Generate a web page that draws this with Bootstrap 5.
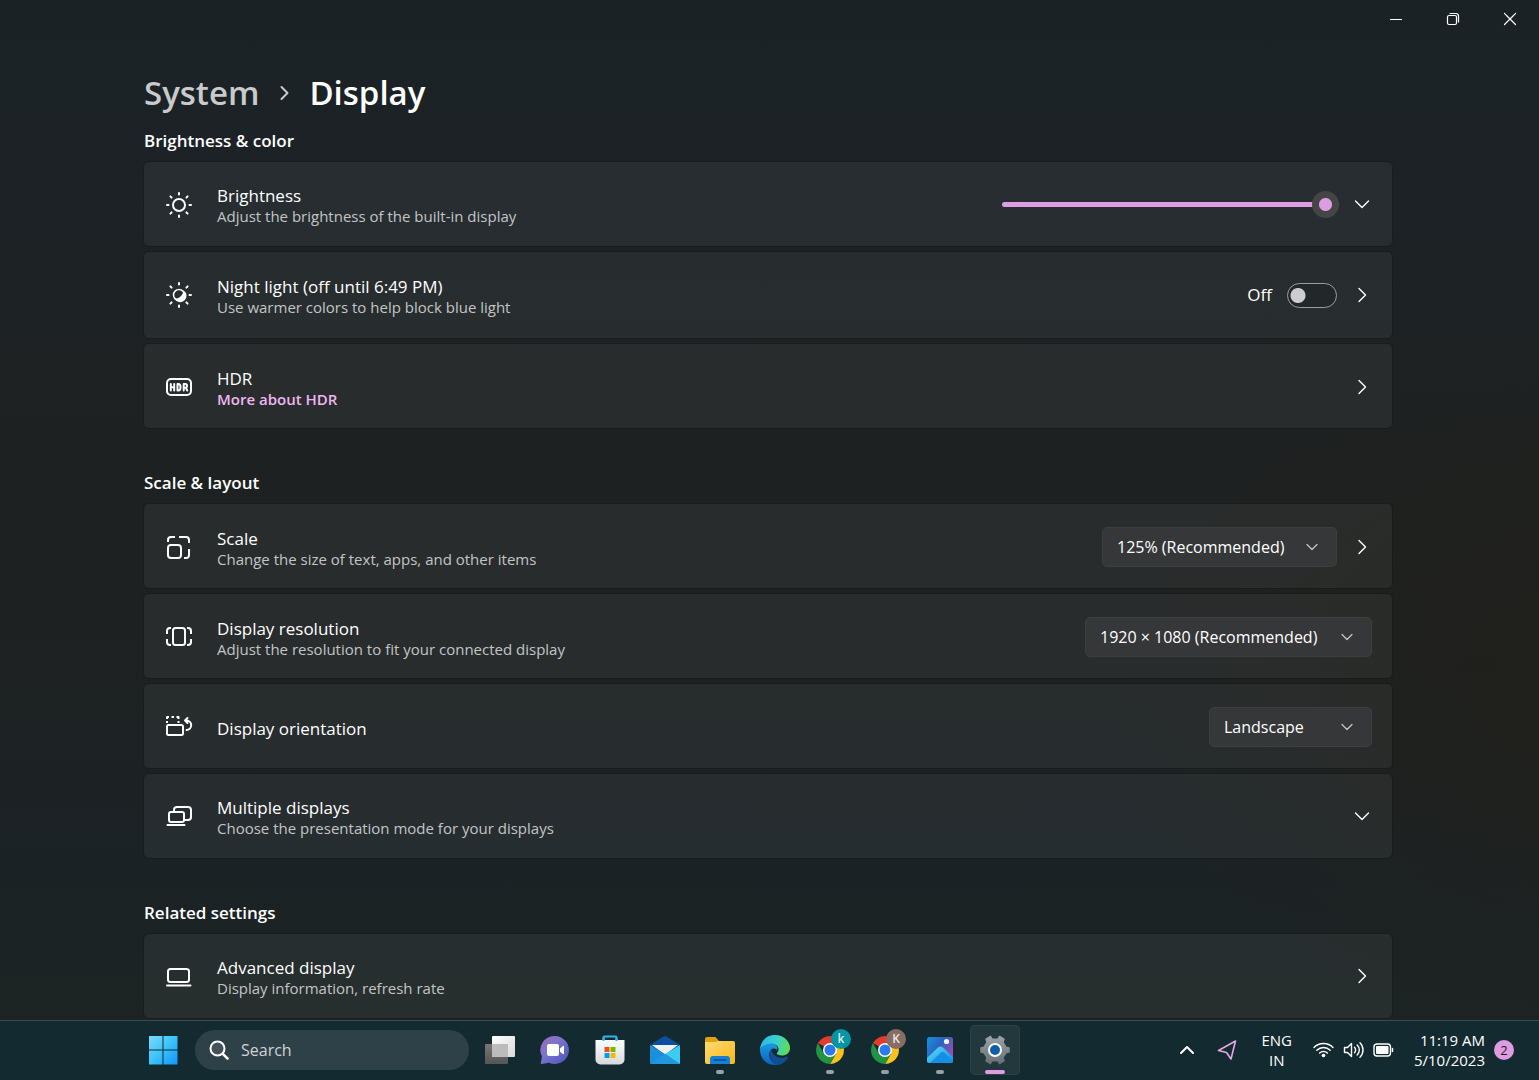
<!DOCTYPE html>
<html lang="en">
<head>
<meta charset="utf-8">
<meta name="viewport" content="width=device-width, initial-scale=1">
<title>Settings - Display</title>
<link href="https://cdn.jsdelivr.net/npm/bootstrap@5.3.0/dist/css/bootstrap.min.css" rel="stylesheet">
<style>
  :root { --accent: #de9de3; --accent-text: #efb6f0; --muted: #c3c5c6; }
  body {
    font-family: "Open Sans", "Noto Sans", sans-serif;
    font-size: 16px;
    color: #fff;
    background:
      radial-gradient(ellipse 32% 32% at 104% 64%, #20201b 0%, rgba(32,32,27,0) 100%),
      linear-gradient(180deg, #1b2226 0%, #1c2225 20%, #1e2121 42%, #1e2121 55%, #1b2225 80%, #1d2422 100%);
  }
  button, a { color: inherit; }
  svg { display: block; }
  .ico { fill: none; stroke: currentColor; stroke-width: 2; stroke-linecap: round; stroke-linejoin: round; flex: none; }
  .thin { stroke-width: 1.4; }
  .hair { stroke-width: 1.2; }
  .soft { stroke: #c8cacb; }
  .pink { stroke: #e5a5ea; stroke-width: 1.6; }
  .plain { border: 0; background: none; padding: 0; color: #fff; }

  .caption-bar { height: 38px; padding-right: 1px; }
  .caption-bar button { width: 57px; height: 38px; display: grid; place-items: center; }

  .page-pane { padding: 0 3px 0 0; }
  .page-column { max-width: 1248px; }
  .crumbs { font-size: 33px; line-height: 44px; font-weight: 600; padding-top: 33px; gap: 18px; }
  .crumbs a { color: #c8cacb; text-decoration: none; }
  .group-title { font-size: 17px; line-height: 24px; font-weight: 600; margin: 0; padding: 43px 0 9px; }
  .crumbs + section .group-title { padding-top: 14px; }
  .stack { gap: 6px; }

  .setting { min-height: 84px; padding: 10px 20px 8px 21px; gap: 24px; border-radius: 5px;
    background: rgba(255,255,255,.052); box-shadow: 0 0 0 1px rgba(0,0,0,.14); }
  .setting.expands { padding-top: 8px; }
  .setting.tall { min-height: 86px; padding-top: 8px; }
  .setting-text { padding-top: 4px; }
  .setting-name { font-size: 17px; line-height: 21px; }
  .setting-note { font-size: 15px; line-height: 21px; color: var(--muted); }
  .setting-note a { color: var(--accent-text); text-decoration: none; font-weight: 600; }
  .controls { gap: 15px; }
  .slider-controls { gap: 13px; }

  .form-select.drop { width: auto; height: 40px; padding: 0 40px 0 14px; font-size: 16px; line-height: 38px;
    color: #fff; border: 1px solid #3c3e3f; border-radius: 5px; background-color: #353738;
    background-image: url("data:image/svg+xml,%3csvg xmlns='http://www.w3.org/2000/svg' viewBox='0 0 12 12'%3e%3cpath fill='none' stroke='%23c3c5c6' stroke-width='1.3' stroke-linecap='round' stroke-linejoin='round' d='M1 3.5l5 5 5-5'/%3e%3c/svg%3e");
    background-repeat: no-repeat; background-position: right 18px center; background-size: 12px 12px; }
  .form-select.drop option { background: #2b2d2e; }
  .form-select.w-scale { width: 235px; }
  .form-select.w-res { width: 287px; }
  .form-select.w-orient { width: 163px; }

  .form-range.level { width: 337px; height: 28px; }
  .level::-webkit-slider-runnable-track { height: 5px; border-radius: 3px; background: var(--accent); }
  .level::-webkit-slider-thumb { width: 27px; height: 27px; margin-top: -11px; border-radius: 50%;
    background: radial-gradient(circle, var(--accent) 0 6px, #454545 7px); box-shadow: none; }
  .level::-webkit-slider-thumb:active { background: radial-gradient(circle, var(--accent) 0 6px, #454545 7px); }

  .form-switch.onoff { padding: 0; min-height: 0; margin: 0; gap: 15px; font-size: 17px; }
  .form-switch.onoff .form-check-input { float: none; width: 50px; height: 25px; margin: 0; border: 1px solid #9b9d9e; background-color: #22272a;
    background-image: radial-gradient(circle at 10px 50%, #cccdce 7px, transparent 8px); background-position: left; }

  .taskbar { height: 60px; padding: 0 25px 2px 138px; background: #132b30; border-top: 1px solid #3b4c50; }
  .apps { gap: 5px; }
  .task { width: 50px; height: 50px; border-radius: 5px; display: grid; place-items: center; }
  .task.running::after, .task.current::after { content: ""; position: absolute; bottom: 1px; left: 50%; width: 8px; margin-left: -4px; height: 4px; border-radius: 2px; background: #98a2a4; }
  .task.current { background: #22383d; box-shadow: inset 0 0 0 1px #2c4146; }
  .task.current::after { width: 20px; margin-left: -10px; background: var(--accent); }
  .finder { width: 274px; height: 40px; border-radius: 20px; padding: 0 14px; gap: 12px; background: #2e4148; margin: 0 1px 0 2px; }
  .finder input { background: none; border: 0; outline: 0; font-size: 16px; color: #fff; width: 100%; padding: 0; }
  .finder input::placeholder { color: #cfd3d5; opacity: 1; }
  .who { position: absolute; top: 4px; right: 4px; width: 20px; height: 20px; border-radius: 50%; font: 600 12px/19px "Open Sans", sans-serif; color: #e4e8e8; text-align: center; }
  .who-teal { background: #0295a4; }
  .who-brown { background: #8a6d62; }
  .tray { font-size: 15px; line-height: 20px; }
  .tray-hidden { margin-right: 22px; }
  .tray-location { margin-right: 24px; }
  .tray-status { gap: 9px; margin: 0 20px 0 21px; }
  .unread { width: 20px; height: 20px; border-radius: 50%; background: var(--accent); color: #1b1b1b; font-size: 13px; line-height: 20px; margin-left: 9px; }
</style>
<script src="https://cdn.jsdelivr.net/npm/bootstrap@5.3.0/dist/js/bootstrap.bundle.min.js"></script>
</head>
<body class="vh-100 d-flex flex-column overflow-hidden">

<header class="caption-bar d-flex justify-content-end flex-shrink-0">
  <button class="plain" aria-label="Minimize"><svg class="ico hair" width="14" height="14"><path d="M1.500 7.500h11"/></svg></button>
  <button class="plain" aria-label="Restore"><svg class="ico hair" width="14" height="14"><rect x="1.500" y="3.500" width="9" height="9" rx="1.500"/><path d="M4 1.500h6a2.500 2.500 0 0 1 2.500 2.500v6"/></svg></button>
  <button class="plain" aria-label="Close"><svg class="ico hair" width="14" height="14"><path d="M1.500 1.500l11 11M12.500 1.500l-11 11"/></svg></button>
</header>

<main class="page-pane flex-grow-1 overflow-hidden">
  <div class="page-column mx-auto">
    <nav class="crumbs d-flex align-items-center" aria-label="Breadcrumb">
      <a href="#">System</a>
      <svg class="ico soft" width="14" height="16"><path d="M4.500 2l6 6-6 6"/></svg>
      <span aria-current="page">Display</span>
    </nav>

    <section>
      <h2 class="group-title">Brightness &amp; color</h2>
      <div class="stack d-flex flex-column">
        <div class="setting expands d-flex align-items-center">
          <svg class="ico" width="28" height="28" viewBox="0 0 28 28"><circle cx="14" cy="15" r="6"/><path d="M14 3v1.500M14 25.500V27M2 15h1.500M24.500 15H26M5.400 6.400l1.200 1.200M21.400 22.400l1.200 1.200M5.400 23.600l1.200-1.200M21.400 7.600l1.200-1.200"/></svg>
          <div class="setting-text flex-grow-1">
            <label class="setting-name d-block" for="brightness">Brightness</label>
            <div class="setting-note">Adjust the brightness of the built-in display</div>
          </div>
          <div class="slider-controls d-flex align-items-center">
            <input type="range" class="form-range level" id="brightness" min="0" max="100" value="100">
            <button class="plain" aria-label="Expand brightness"><svg class="ico thin" width="20" height="20"><path d="M3.500 7l6.500 6.500L16.500 7"/></svg></button>
          </div>
        </div>

        <div class="setting tall d-flex align-items-center">
          <svg class="ico" width="28" height="28" viewBox="0 0 28 28"><circle cx="14" cy="14" r="5.500" stroke-width="1.500"/><path d="M18.500 9.500A6.300 6.300 0 1 1 9.500 17.500C14 18 18 14.500 18.500 9.500Z" fill="currentColor" stroke="none"/><path d="M14 2v1.500M14 24.500V26M2 14h1.500M24.500 14H26M5.400 5.400l1.200 1.200M21.400 21.400l1.200 1.200M5.400 22.600l1.200-1.200M21.400 6.600l1.200-1.200"/></svg>
          <div class="setting-text flex-grow-1">
            <div class="setting-name">Night light (off until 6:49 PM)</div>
            <div class="setting-note">Use warmer colors to help block blue light</div>
          </div>
          <div class="controls d-flex align-items-center">
            <div class="form-check form-switch onoff d-flex align-items-center">
              <label for="night">Off</label>
              <input class="form-check-input" type="checkbox" role="switch" id="night" aria-label="Night light">
            </div>
            <button class="plain" aria-label="Night light settings"><svg class="ico thin" width="20" height="20"><path d="M7 3.500l6.500 6.500L7 16.500"/></svg></button>
          </div>
        </div>

        <div class="setting d-flex align-items-center">
          <svg class="ico" width="28" height="28" viewBox="0 0 28 28"><rect x="2" y="6" width="24" height="16" rx="4"/><path d="M5.800 11v6.500M9.200 11v6.500M5.800 14.200h3.400M12.500 11v6.500h.800c3 0 3-6.500 0-6.500zM18.700 17.500V11h1.600c2.300 0 2.300 3.700 0 3.700h-1.600M20.800 14.700l1.500 2.800"/></svg>
          <div class="setting-text flex-grow-1">
            <div class="setting-name">HDR</div>
            <div class="setting-note"><a href="#">More about HDR</a></div>
          </div>
          <button class="plain" aria-label="HDR settings"><svg class="ico thin" width="20" height="20"><path d="M7 3.500l6.500 6.500L7 16.500"/></svg></button>
        </div>
      </div>
    </section>

    <section>
      <h2 class="group-title">Scale &amp; layout</h2>
      <div class="stack d-flex flex-column">
        <div class="setting d-flex align-items-center">
          <svg class="ico" width="28" height="28" viewBox="0 0 28 28"><rect x="3" y="12" width="13" height="13" rx="3"/><path d="M3 9V7a3 3 0 0 1 3-3h4M14 4h7a3 3 0 0 1 3 3v3M24 16v6a3 3 0 0 1-3 3h-2" stroke-linecap="butt"/></svg>
          <div class="setting-text flex-grow-1">
            <label class="setting-name d-block" for="scale">Scale</label>
            <div class="setting-note">Change the size of text, apps, and other items</div>
          </div>
          <div class="controls d-flex align-items-center">
            <select class="form-select drop w-scale" id="scale"><option>125% (Recommended)</option></select>
            <button class="plain" aria-label="Custom scaling"><svg class="ico thin" width="20" height="20"><path d="M7 3.500l6.500 6.500L7 16.500"/></svg></button>
          </div>
        </div>

        <div class="setting d-flex align-items-center">
          <svg class="ico" width="28" height="28" viewBox="0 0 28 28"><rect x="8" y="5" width="12" height="17" rx="2.500"/><path d="M6 5H5a3 3 0 0 0-3 3v3M2 16v3a3 3 0 0 0 3 3h1M22 5h1a3 3 0 0 1 3 3v3M26 16v3a3 3 0 0 1-3 3h-1" stroke-linecap="butt"/></svg>
          <div class="setting-text flex-grow-1">
            <label class="setting-name d-block" for="resolution">Display resolution</label>
            <div class="setting-note">Adjust the resolution to fit your connected display</div>
          </div>
          <select class="form-select drop w-res" id="resolution"><option>1920 × 1080 (Recommended)</option></select>
        </div>

        <div class="setting d-flex align-items-center">
          <svg class="ico" width="28" height="28" viewBox="0 0 28 28"><rect x="2" y="12" width="16" height="10" rx="1.500"/><path d="M2 10V8M2 6V4h2M6.500 4h2.500M11.500 4h2v2M13.500 8v2" stroke-linecap="butt"/><path d="M20 7.500h1.500a4.700 4.700 0 0 1 0 9.400M22.500 5L20 7.500l2.500 2.500"/></svg>
          <div class="setting-text flex-grow-1"><label class="setting-name" for="orientation">Display orientation</label></div>
          <select class="form-select drop w-orient" id="orientation"><option>Landscape</option></select>
        </div>

        <div class="setting expands d-flex align-items-center">
          <svg class="ico" width="28" height="28" viewBox="0 0 28 28"><rect x="4" y="10" width="15" height="10" rx="2"/><path d="M9 9V8a3 3 0 0 1 3-3h11a3 3 0 0 1 3 3v7a3 3 0 0 1-3 3h-3M2.500 23h17"/></svg>
          <div class="setting-text flex-grow-1">
            <div class="setting-name">Multiple displays</div>
            <div class="setting-note">Choose the presentation mode for your displays</div>
          </div>
          <button class="plain" aria-label="Expand multiple displays"><svg class="ico thin" width="20" height="20"><path d="M3.500 7l6.500 6.500L16.500 7"/></svg></button>
        </div>
      </div>
    </section>

    <section>
      <h2 class="group-title">Related settings</h2>
      <div class="setting expands d-flex align-items-center">
        <svg class="ico" width="28" height="28" viewBox="0 0 28 28"><rect x="3" y="7" width="21" height="13" rx="2.500"/><path d="M2 23.500h23.500"/></svg>
        <div class="setting-text flex-grow-1">
          <div class="setting-name">Advanced display</div>
          <div class="setting-note">Display information, refresh rate</div>
        </div>
        <button class="plain" aria-label="Open advanced display"><svg class="ico thin" width="20" height="20"><path d="M7 3.500l6.500 6.500L7 16.500"/></svg></button>
      </div>
    </section>
  </div>
</main>

<footer class="taskbar d-flex align-items-center justify-content-between flex-shrink-0">
  <div class="apps d-flex align-items-center">
    <button class="plain task" aria-label="Start">
      <svg width="30" height="30"><defs><linearGradient id="win" gradientUnits="userSpaceOnUse" x1="0" y1="0" x2="30" y2="30"><stop offset="0" stop-color="#80dbff"/><stop offset=".5" stop-color="#3cc3fb"/><stop offset="1" stop-color="#0f93fa"/></linearGradient></defs><path fill="url(#win)" d="M1 1h13.500v13.500H1zM15.500 1H29.500v13.500h-14zM1 15.500h13.500v14H1zM15.500 15.500h14v14h-14z"/></svg>
    </button>
    <div class="finder d-flex align-items-center">
      <svg class="ico" width="20" height="20"><circle cx="8.500" cy="8.500" r="7" fill="#42545a"/><path d="M13.800 13.800l4.700 4.700" stroke-width="2.500"/></svg>
      <input type="text" placeholder="Search" aria-label="Search">
    </div>
    <button class="plain task" aria-label="Task view">
      <svg width="30" height="28"><defs><linearGradient id="tv" x2="1" y2="1"><stop stop-color="#fff"/><stop offset="1" stop-color="#d9d9d9"/></linearGradient><linearGradient id="tv2" x2="0" y2="1"><stop stop-color="#777"/><stop offset="1" stop-color="#555"/></linearGradient></defs><rect y="8" width="23" height="20" rx="1" fill="url(#tv2)"/><rect x="7" width="23" height="21" rx="1" fill="url(#tv)"/><path fill="#bcbcbc" d="M7 8h16v13H8a1 1 0 0 1-1-1z"/></svg>
    </button>
    <button class="plain task" aria-label="Chat">
      <svg width="30" height="30"><defs><linearGradient id="chat" x1="0" y1="0" x2="1" y2="1"><stop offset="0" stop-color="#a06ab4"/><stop offset=".4" stop-color="#7b74cf"/><stop offset="1" stop-color="#4b53bc"/></linearGradient></defs><path fill="url(#chat)" d="M15 1a14 14 0 1 1-6 26.700L2 29c-1 .200-1.400-.500-1.200-1.300L2 21.500A14 14 0 0 1 15 1z"/><rect x="7" y="9" width="12" height="12" rx="2" fill="#fff"/><path fill="#fff" d="M20 13.500l3-2.500c.600-.400 1 0 1 .600v7c0 .600-.400 1-1 .600l-3-2.500z"/></svg>
    </button>
    <button class="plain task" aria-label="Store">
      <svg width="30" height="30"><defs><linearGradient id="bag" x2="0" y2="1"><stop stop-color="#fff"/><stop offset="1" stop-color="#d6d8d9"/></linearGradient></defs><path fill="none" stroke="#2fb4ec" stroke-width="2.200" d="M8.500 6V2.500q0-1 1-1h11q1 0 1 1V6"/><path fill="url(#bag)" d="M1 5h28q.500 0 .500.500v19a5 5 0 0 1-5 5h-19a5 5 0 0 1-5-5v-19q0-.500.500-.500z"/><path d="M8.500 3v3M21.500 3v3" stroke="#2fb4ec" stroke-width="2"/><path fill="#f04e26" d="M9.500 12h5v5h-5z"/><path fill="#7db800" d="M15.500 12h5v5h-5z"/><path fill="#009fee" d="M9.500 18h5v5h-5z"/><path fill="#fdb600" d="M15.500 18h5v5h-5z"/></svg>
    </button>
    <button class="plain task" aria-label="Mail">
      <svg width="30" height="30"><path fill="#0a4fa0" d="M0 10L13.500 1.600q1.500-.800 3 0L30 10l-3 3H3z"/><path fill="#f1f1f1" d="M2 10h26L15 20z"/><path fill="#1a90dc" d="M0 10l15 9L30 29H1.500Q0 29 0 27.500z"/><path fill="#3ccbf4" d="M30 10L15 19l14 10q1 0 1-1.500z"/><path fill="#2098e0" d="M15 19l14.500 9.500q-.500.500-1 .500H1.500q-.700 0-1.100-.500z"/></svg>
    </button>
    <button class="plain task running position-relative" aria-label="File Explorer">
      <svg width="30" height="30"><defs><linearGradient id="fold" x2="1" y2="1"><stop stop-color="#ffdb72"/><stop offset="1" stop-color="#f9b816"/></linearGradient></defs><path fill="#e3a008" d="M0 4a2 2 0 0 1 2-2h8.500l3.500 4v3H0z"/><path fill="url(#fold)" d="M0 7h10l3-1h15a2 2 0 0 1 2 2v19a2 2 0 0 1-2 2H2a2 2 0 0 1-2-2z"/><path fill="#1580d4" d="M5 29v-5a3 3 0 0 1 3-3h14a3 3 0 0 1 3 3v5z"/><path d="M9 25h12" stroke="#0b4d90" stroke-width="1.500" stroke-linecap="round"/></svg>
    </button>
    <button class="plain task" aria-label="Edge">
      <svg width="30" height="30"><defs><linearGradient id="edgeTop" x1="0" y1=".3" x2="1" y2=".5"><stop stop-color="#2fb5ed"/><stop offset=".5" stop-color="#36d0cf"/><stop offset="1" stop-color="#62dc55"/></linearGradient><linearGradient id="edgeLow" x2="0" y2="1"><stop stop-color="#1a9de4"/><stop offset="1" stop-color="#0c62bb"/></linearGradient></defs><path fill="#104f91" d="M11.500 13C7 18 10 27 17 30c5-.500 9-3.500 11-7.500.300-.800-.400-1-1-.700-7 3.200-15.500-.800-15.500-8.800z"/><path fill="url(#edgeLow)" d="M0 15C0 9 5 6.500 10 7.500c6 1 8.500 4.500 7 7.500-.500-1.500-4-2.500-6-.500-4.500 5-.500 13 6 15.400C6 31 0 23 0 15z"/><path fill="url(#edgeTop)" d="M0 14C1 5 7 0 15 0c10 0 15 7.500 15 13 0 5-4 7.500-8 7.500-3.500 0-6-1.200-5-2.500 4-4.500 0-9.500-6-9.500-5 0-9 2.500-11 5.500z"/></svg>
    </button>
    <button class="plain task running position-relative" aria-label="Chrome, profile k">
      <svg width="30" height="30"><path fill="#e33b2e" d="M15 15L2.900 8A14 14 0 0 1 27.100 8z"/><path fill="#fcc219" d="M15 8h12.100a14 14 0 0 1-12 21l6-10.500z"/><path fill="#229342" d="M2.900 8l6 10.500L21 18.500 15 29A14 14 0 0 1 2.900 8z"/><circle cx="15" cy="15" r="7" fill="#fff"/><circle cx="15" cy="15" r="5.500" fill="#2a79f0"/></svg>
      <span class="who who-teal">k</span>
    </button>
    <button class="plain task running position-relative" aria-label="Chrome, profile K">
      <svg width="30" height="30"><path fill="#e33b2e" d="M15 15L2.900 8A14 14 0 0 1 27.100 8z"/><path fill="#fcc219" d="M15 8h12.100a14 14 0 0 1-12 21l6-10.500z"/><path fill="#229342" d="M2.900 8l6 10.500L21 18.500 15 29A14 14 0 0 1 2.900 8z"/><circle cx="15" cy="15" r="7" fill="#fff"/><circle cx="15" cy="15" r="5.500" fill="#2a79f0"/></svg>
      <span class="who who-brown">K</span>
    </button>
    <button class="plain task running position-relative" aria-label="Photos">
      <svg width="26" height="26"><defs><linearGradient id="pho" x1="0" y1="0" x2="1" y2=".6"><stop stop-color="#1593e0"/><stop offset=".5" stop-color="#2a62c0"/><stop offset="1" stop-color="#9a4fae"/></linearGradient><linearGradient id="hill" x2="1" y2="1"><stop stop-color="#5fe3fb"/><stop offset="1" stop-color="#0d83dc"/></linearGradient><clipPath id="phc"><rect width="26" height="26" rx="2.500"/></clipPath></defs><g clip-path="url(#phc)"><rect width="26" height="26" fill="url(#pho)"/><path fill="url(#hill)" d="M-1 22l12-11.500q2.500-2.200 5 0L28 22v6H-1z"/><path fill="#1290e6" d="M3 26l11-10.500q1.500-1.300 3 0L27 25v3H3z"/></g><circle cx="19.500" cy="4.500" r="2.600" fill="#eef3fb"/></svg>
    </button>
    <button class="plain task current position-relative" aria-label="Settings">
      <svg width="30" height="30" viewBox="0 0 30 30"><defs><linearGradient id="gear" x2="0" y2="1"><stop stop-color="#9aa2a9"/><stop offset="1" stop-color="#686f75"/></linearGradient></defs><path fill="url(#gear)" stroke="url(#gear)" stroke-width="1.500" stroke-linejoin="round" d="M10.500 1.500l1.500 2.700h6l1.500-2.700 4.500 2.600-1 3.200 3 5 3 .700v4l-3 .700-3 5 1 3.200-4.500 2.600-1.500-2.700h-6l-1.500 2.700L6 25.900l1-3.200-3-5L1 17v-4l3-.700 3-5-1-3.200z"/><circle cx="15" cy="15" r="7" fill="#fff"/><circle cx="15" cy="15" r="5" fill="#0f5fae"/></svg>
    </button>
  </div>

  <div class="tray d-flex align-items-center">
    <button class="plain tray-hidden" aria-label="Show hidden icons"><svg class="ico" width="16" height="16"><path d="M2 11l6-6 6 6"/></svg></button>
    <button class="plain tray-location" aria-label="Location in use"><svg class="ico pink" width="20" height="20"><path d="M1.500 10.500L18.500 1l-4.500 18-4.500-6.500z"/></svg></button>
    <button class="plain text-center">ENG<br>IN</button>
    <div class="tray-status d-flex align-items-center">
      <svg class="ico thin" width="21" height="20"><path d="M1 7.500c5.300-5.300 13.700-5.300 19 0M3.800 10.300c3.700-3.700 9.700-3.700 13.400 0M6.600 13c2.200-2.100 5.600-2.100 7.800 0"/><circle cx="10.500" cy="15.500" r="1.800" fill="currentColor" stroke="none"/></svg>
      <svg class="ico thin" width="21" height="20"><path d="M1.500 7.500h3l4-4v13l-4-4h-3zM11.500 7.300c1.500 1.500 1.500 3.900 0 5.400M14.200 5c2.800 2.800 2.800 7.200 0 10M17 2.800c4 4 4 10.400 0 14.400"/></svg>
      <svg class="ico thin" width="21" height="20"><rect x="1" y="4" width="16.500" height="12" rx="3"/><rect x="3" y="6" width="12.500" height="8" rx="1" fill="currentColor" stroke="none"/><path d="M19.500 8.500v3"/></svg>
    </div>
    <button class="plain text-end">11:19 AM<br>5/10/2023</button>
    <span class="unread text-center">2</span>
  </div>
</footer>
</body>
</html>
